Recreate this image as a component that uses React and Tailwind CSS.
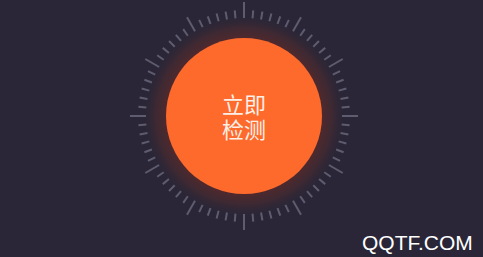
import React from "react";

function Dial() {
  const cx = 116, cy = 116;
  const ticks = [];
  for (let i = 0; i < 72; i++) {
    const a = (i * 5 * Math.PI) / 180;
    const long = i % 6 === 0;
    const r1 = 98;
    const r2 = long ? 114 : 106;
    const s = Math.sin(a), c = Math.cos(a);
    ticks.push(
      <line
        key={i}
        x1={cx + r1 * s}
        y1={cy - r1 * c}
        x2={cx + r2 * s}
        y2={cy - r2 * c}
        stroke="#5e5c6e"
        strokeWidth={2}
        strokeLinecap="butt"
      />
    );
  }
  return (
    <svg width="232" height="232" viewBox="0 0 232 232" className="absolute inset-0">
      <defs>
        <radialGradient id="g" cx="116" cy="116" r="102" gradientUnits="userSpaceOnUse">
          <stop offset="0.74" stopColor="#52292c" />
          <stop offset="0.86" stopColor="#3f2932" />
          <stop offset="1" stopColor="#2a2637" stopOpacity="0" />
        </radialGradient>
      </defs>
      <circle cx={cx} cy={cy} r="102" fill="url(#g)" />
      {ticks}
    </svg>
  );
}

export default function App() {
  return (
    <div
      className="relative w-[483px] h-[257px] bg-[#2a2637] overflow-hidden"
      style={{ fontFamily: '"Noto Sans CJK SC", "Noto Sans", sans-serif' }}
    >
      <div className="pl-[128px] pt-0">
        <div className="relative w-[232px] h-[232px] flex items-center justify-center">
          <Dial />
          <div className="relative w-[156px] h-[156px] rounded-full bg-[#fd6a2c] flex flex-col items-center justify-center text-[#fdeee6] text-[22px] leading-[25px]">
            <span>立即</span>
            <span>检测</span>
          </div>
        </div>
      </div>
      <div
        className="absolute left-[362px] top-[232px] text-white text-[21px] leading-none"
        style={{ fontFamily: '"Liberation Sans", Arial, sans-serif' }}
      >
        QQTF.COM
      </div>
    </div>
  );
}
